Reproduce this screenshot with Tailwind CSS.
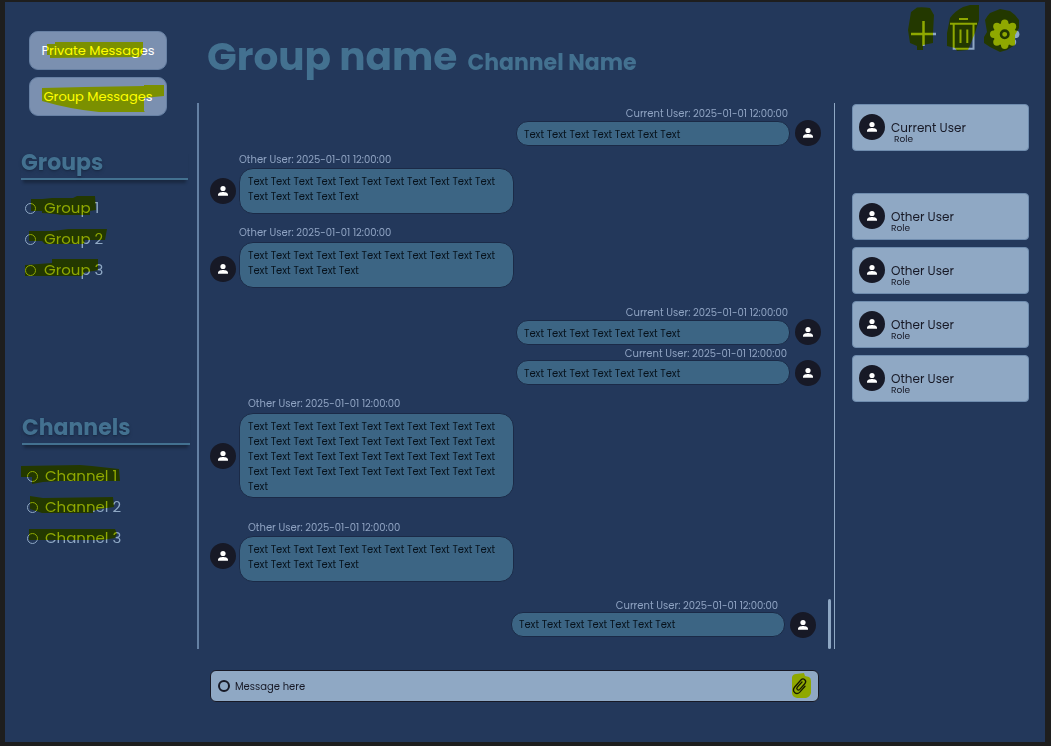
<!DOCTYPE html>
<html lang="en">
<head>
<meta charset="utf-8">
<meta name="viewport" content="width=device-width, initial-scale=1">
<title>Group chat</title>
<script src="https://cdn.jsdelivr.net/npm/@tailwindcss/browser@4"></script>
</head>
<body class="bg-[#1e1e1e] font-[Poppins,Inter,sans-serif]">
<svg class="hidden" aria-hidden="true">
  <symbol id="person" viewBox="0 0 26 26">
    <circle cx="13" cy="13" r="13" fill="#171926"/>
    <circle cx="13" cy="10.5" r="2.6" fill="#fff"/>
    <path d="M8 17.8v-1.2c0-1.7 3-2.5 5-2.5s5 .8 5 2.5v1.2z" fill="#fff"/>
  </symbol>
</svg>

<div class="min-h-screen pt-[2px] pr-[6px] pb-1 pl-[5px] flex">
<div class="flex-1 flex bg-[#23385b]">

  <!-- Sidebar -->
  <aside class="w-[192px] shrink-0 pt-[29px]">
    <nav class="ml-6 flex flex-col gap-[7px] w-[138px]">
      <button class="relative h-[39px] rounded-[9px] bg-[#7b90b0] border border-[#6780a3] text-[13px] text-white whitespace-nowrap">Private Messages
        <svg class="absolute -left-px -top-px w-px h-px overflow-visible mix-blend-multiply" aria-hidden="true"><path fill="#ff0" d="M18 13H26V11H114V22L111 26L21 27V24H18Z"/></svg>
      </button>
      <button class="relative h-[39px] rounded-[9px] bg-[#7b90b0] border border-[#6780a3] text-[13px] text-white whitespace-nowrap">Group Messages
        <svg class="absolute -left-px -top-px w-px h-px overflow-visible mix-blend-multiply" aria-hidden="true"><path fill="#ff0" d="M13 11L56 10L115 9V8H135V19L115 21V34L116 35H70Q40 32 13 24Z"/></svg>
      </button>
    </nav>

    <h2 class="mt-8 ml-4 w-[167px] border-b-2 border-[#437190] leading-[30px] text-[22px] font-bold text-[#437190] text-shadow-md shadow-[0_5px_3px_-2px_rgba(0,0,0,0.3)]">Groups</h2>
    <div class="mt-4 ml-5 flex flex-col gap-[7px] text-[15px] text-[#8fa8c4]">
      <label class="relative h-6 flex items-center gap-2"><input type="radio" name="group" class="appearance-none size-[11px] rounded-full border border-[#8fa8c4]">Group 1
        <svg class="absolute left-0 top-0 w-px h-px overflow-visible mix-blend-multiply" aria-hidden="true"><path fill="#ff0" d="M6 3H17L27 2H48L52 0H70L71 14L65 15V19H37L30 18L17 17V15H6Z"/></svg></label>
      <label class="relative h-6 flex items-center gap-2"><input type="radio" name="group" class="appearance-none size-[11px] rounded-full border border-[#8fa8c4]">Group 2
        <svg class="absolute left-0 top-0 w-px h-px overflow-visible mix-blend-multiply" aria-hidden="true"><path fill="#ff0" d="M4 4H28L43 2H82L80 13H60L59 17H20L17 14H4Z"/></svg></label>
      <label class="relative h-6 flex items-center gap-2"><input type="radio" name="group" class="appearance-none size-[11px] rounded-full border border-[#8fa8c4]">Group 3
        <svg class="absolute left-0 top-0 w-px h-px overflow-visible mix-blend-multiply" aria-hidden="true"><path fill="#ff0" d="M0 7L27 5V1H73V12L69 13L60 14L57 18H0Z"/></svg></label>
    </div>

    <h2 class="mt-[131px] ml-[17px] w-[168px] border-b-2 border-[#437190] leading-[30px] text-[22px] font-bold text-[#437190] text-shadow-md shadow-[0_5px_3px_-2px_rgba(0,0,0,0.3)]">Channels</h2>
    <div class="mt-[19px] ml-[22px] flex flex-col gap-[7px] text-[15px] text-[#8fa8c4]">
      <label class="relative h-6 flex items-center gap-[7px]"><input type="radio" name="channel" class="appearance-none size-[11px] rounded-full border border-[#8fa8c4]">Channel 1
        <svg class="absolute left-0 top-0 w-px h-px overflow-visible mix-blend-multiply" aria-hidden="true"><path fill="#ff0" d="M-6 2L53 1L65 2L92 5L93 17H33L16 18L5 20V13H-6Z"/></svg></label>
      <label class="relative h-6 flex items-center gap-[7px]"><input type="radio" name="channel" class="appearance-none size-[11px] rounded-full border border-[#8fa8c4]">Channel 2
        <svg class="absolute left-0 top-0 w-px h-px overflow-visible mix-blend-multiply" aria-hidden="true"><path fill="#ff0" d="M3 1L16 3L86 2L87 12L73 14L66 16V18H15L3 14Z"/></svg></label>
      <label class="relative h-6 flex items-center gap-[7px]"><input type="radio" name="channel" class="appearance-none size-[11px] rounded-full border border-[#8fa8c4]">Channel 3
        <svg class="absolute left-0 top-0 w-px h-px overflow-visible mix-blend-multiply" aria-hidden="true"><path fill="#ff0" d="M2 3H88L90 8L88 12L76 14H2Z"/></svg></label>
    </div>
  </aside>

  <div class="flex-1 min-w-0 flex flex-col">
    <header class="h-[101px] flex justify-between">
      <div class="flex items-baseline gap-[10px] pl-[10px] pt-[25px] text-[#437190] font-bold whitespace-nowrap">
        <h1 class="text-[39px] leading-[60px]">Group name</h1>
        <p class="text-[22px]">Channel Name</p>
      </div>
      <div class="flex pr-[21px] pt-[2px] text-[#8fa8c4]">
        <button aria-label="Add" class="w-10 h-[50px]">
          <svg class="w-10 h-[50px]" viewBox="0 0 40 50"><path d="M7 30H32M19.500 17V42" stroke="currentColor" stroke-width="2.500" fill="none"/><path class="mix-blend-multiply" fill="#ff0" d="M7 8L13 3.500Q20 3 26 4L30 11L29 29V39L19 41V46H13V42L6 39L4 26Z"/></svg>
        </button>
        <button aria-label="Delete" class="w-10 h-[50px]">
          <svg class="w-10 h-[50px]" viewBox="0 0 40 50"><path d="M6 19.700H33M15 15H24M9.700 20V44.700H29.500V20M16.500 25.500V39M23.300 25.500V39" stroke="currentColor" stroke-width="2" fill="none"/><path class="mix-blend-multiply" fill="#ff0" d="M6 14Q11 7 19 3L26 1H35V16L31 29L24 46L13 47L11 44L3 42V29Z"/></svg>
        </button>
        <button aria-label="Settings" class="w-10 h-[50px]">
          <svg class="w-10 h-[50px]" viewBox="0 0 40 50"><g transform="translate(20.700 30.300)"><g fill="currentColor"><circle r="11.300"/><circle cy="-11" r="3.700"/><circle cy="11" r="3.700"/><circle cx="-11" r="3.700"/><circle cx="11" r="3.700"/><circle cx="7.800" cy="7.800" r="3.700"/><circle cx="-7.800" cy="7.800" r="3.700"/><circle cx="7.800" cy="-7.800" r="3.700"/><circle cx="-7.800" cy="-7.800" r="3.700"/></g><circle r="3.700" fill="none" stroke="#23385b" stroke-width="2.600"/></g><path class="mix-blend-multiply" fill="#ff0" d="M1 16Q3 12 6 9L16 5L26 7L31 11L35 16V24L31 31V41L23 46L16 48L6 43L0 39V33L3 28Z"/></svg>
        </button>
      </div>
    </header>

    <div class="flex">
      <main class="flex-1 min-w-0">
        <section aria-label="Messages" class="relative h-[546px] border-l-2 border-l-[#6480a3] border-r border-r-[#8fa8c4] pl-[11px] pr-[13px] pt-[5px] text-[10px]">
          <article class="flex flex-col items-end text-[#8fa3c2]">
            <p class="leading-3 mr-[33px]">Current User: 2025-01-01 12:00:00</p>
            <div class="flex items-center gap-[5px]"><p class="w-[274px] rounded-[12px] border border-[#1b2a47] bg-[#3c6584] px-[7px] pt-[5px] pb-[3px] leading-[15px] text-[#07121c]">Text Text Text Text Text Text Text</p><svg class="size-[26px]"><use href="#person"/></svg></div>
          </article>
          <article class="mt-2 text-[#8fa3c2]">
            <p class="leading-3 ml-[29px] mb-[2px]">Other User: 2025-01-01 12:00:00</p>
            <div class="flex items-center gap-[3px]"><svg class="size-[26px]"><use href="#person"/></svg><p class="w-[275px] min-h-[46px] rounded-[14px] border border-[#1b2a47] bg-[#3c6584] px-2 pt-[5px] pb-[3px] leading-[15px] text-[#07121c]">Text Text Text Text Text Text Text Text Text Text Text Text Text Text Text Text</p></div>
          </article>
          <article class="mt-[13px] text-[#8fa3c2]">
            <p class="leading-3 ml-[29px] mb-[3px]">Other User: 2025-01-01 12:00:00</p>
            <div class="flex items-end gap-[3px]"><svg class="size-[26px] mb-[6px]"><use href="#person"/></svg><p class="w-[275px] min-h-[46px] rounded-[14px] border border-[#1b2a47] bg-[#3c6584] px-2 pt-[5px] pb-[3px] leading-[15px] text-[#07121c]">Text Text Text Text Text Text Text Text Text Text Text Text Text Text Text Text</p></div>
          </article>
          <article class="mt-[19px] flex flex-col items-end text-[#8fa3c2]">
            <p class="leading-3 mr-[33px]">Current User: 2025-01-01 12:00:00</p>
            <div class="flex items-center gap-[5px]"><p class="w-[274px] rounded-[12px] border border-[#1b2a47] bg-[#3c6584] px-[7px] pt-[5px] pb-[3px] leading-[15px] text-[#07121c]">Text Text Text Text Text Text Text</p><svg class="size-[26px]"><use href="#person"/></svg></div>
          </article>
          <article class="mt-[3px] flex flex-col items-end text-[#8fa3c2]">
            <p class="leading-3 mr-[34px]">Current User: 2025-01-01 12:00:00</p>
            <div class="flex items-start gap-[5px]"><p class="w-[274px] rounded-[12px] border border-[#1b2a47] bg-[#3c6584] px-[7px] pt-[5px] pb-[3px] leading-[15px] text-[#07121c]">Text Text Text Text Text Text Text</p><svg class="size-[26px]"><use href="#person"/></svg></div>
          </article>
          <article class="mt-3 text-[#8fa3c2]">
            <p class="leading-3 ml-[38px] mb-[3px]">Other User: 2025-01-01 12:00:00</p>
            <div class="flex items-center gap-[3px]"><svg class="size-[26px]"><use href="#person"/></svg><p class="w-[275px] min-h-[46px] rounded-[14px] border border-[#1b2a47] bg-[#3c6584] px-2 pt-[5px] pb-[3px] leading-[15px] text-[#07121c]">Text Text Text Text Text Text Text Text Text Text Text Text Text Text Text Text Text Text Text Text Text Text Text Text Text Text Text Text Text Text Text Text Text Text Text Text Text Text Text Text Text Text Text Text Text</p></div>
          </article>
          <article class="mt-6 text-[#8fa3c2]">
            <p class="leading-3 ml-[38px] mb-[2px]">Other User: 2025-01-01 12:00:00</p>
            <div class="flex items-start gap-[3px]"><svg class="size-[26px] mt-[7px]"><use href="#person"/></svg><p class="w-[275px] min-h-[46px] rounded-[14px] border border-[#1b2a47] bg-[#3c6584] px-2 pt-[5px] pb-[3px] leading-[15px] text-[#07121c]">Text Text Text Text Text Text Text Text Text Text Text Text Text Text Text Text</p></div>
          </article>
          <article class="mt-[18px] mr-[5px] flex flex-col items-end text-[#8fa3c2]">
            <p class="leading-3 mr-[38px]">Current User: 2025-01-01 12:00:00</p>
            <div class="flex items-start gap-[5px]"><p class="w-[274px] rounded-[12px] border border-[#1b2a47] bg-[#3c6584] px-[7px] py-1 leading-[15px] text-[#07121c]">Text Text Text Text Text Text Text</p><svg class="size-[26px]"><use href="#person"/></svg></div>
          </article>
          <div class="absolute right-[3px] bottom-0 w-[3px] h-[50px] rounded-full bg-[#8fa8c4]"></div>
        </section>

        <form class="mt-[21px] ml-[13px] mr-4 h-8 flex items-center gap-[5px] rounded-[6px] border border-[#171926] bg-[#8fa8c4] pl-[7px] pr-[7px]">
          <button type="button" aria-label="Message options" class="size-3 rounded-full border-2 border-[#171926]"></button>
          <input type="text" aria-label="Message" placeholder="Message here" class="flex-1 min-w-0 text-[10px] text-[#171926] placeholder:text-[#171926] outline-none">
          <button type="button" aria-label="Attach file" class="h-[26px] w-5">
            <svg class="w-5 h-[26px]" viewBox="0 0 20 26"><path d="M11.500 8.500L6.800 13.600C5.300 15.600 7.600 17.600 9.300 15.900L14.300 10.300C16.800 7 13 3.900 10.400 6.500L4.200 13.500C.800 17.800 5.800 22 9.300 18.600L14.500 12.800" transform="translate(-.500 .500)" fill="none" stroke="#171926" stroke-width="1.300" stroke-linecap="round"/><path class="mix-blend-multiply" fill="#ff0" d="M1 4Q2 1 5 1L13 0L14 3L18 4Q20 5 20 8V20Q19 24 15 25H6Q1 24 1 20Z"/></svg>
          </button>
        </form>
      </main>

      <aside aria-label="Members" class="w-[210px] shrink-0 pl-[17px] pr-4 pt-px">
        <ul class="flex flex-col gap-[7px] leading-3 text-[#171926]">
          <li class="h-[47px] mb-[35px] flex items-start gap-[6px] rounded-[4px] border border-[#6f8cae] bg-[#8fa8c4] pl-[6px] pt-[9px]"><svg class="size-[26px]"><use href="#person"/></svg><div class="pt-2"><p class="text-[12px]">Current User</p><p class="ml-[3px] text-[9px] leading-[10px]">Role</p></div></li>
          <li class="h-[47px] flex items-start gap-[6px] rounded-[4px] border border-[#6f8cae] bg-[#8fa8c4] pl-[6px] pt-[9px]"><svg class="size-[26px]"><use href="#person"/></svg><div class="pt-2"><p class="text-[12px]">Other User</p><p class="text-[9px] leading-[10px]">Role</p></div></li>
          <li class="h-[47px] flex items-start gap-[6px] rounded-[4px] border border-[#6f8cae] bg-[#8fa8c4] pl-[6px] pt-[9px]"><svg class="size-[26px]"><use href="#person"/></svg><div class="pt-2"><p class="text-[12px]">Other User</p><p class="text-[9px] leading-[10px]">Role</p></div></li>
          <li class="h-[47px] flex items-start gap-[6px] rounded-[4px] border border-[#6f8cae] bg-[#8fa8c4] pl-[6px] pt-[9px]"><svg class="size-[26px]"><use href="#person"/></svg><div class="pt-2"><p class="text-[12px]">Other User</p><p class="text-[9px] leading-[10px]">Role</p></div></li>
          <li class="h-[47px] flex items-start gap-[6px] rounded-[4px] border border-[#6f8cae] bg-[#8fa8c4] pl-[6px] pt-[9px]"><svg class="size-[26px]"><use href="#person"/></svg><div class="pt-2"><p class="text-[12px]">Other User</p><p class="text-[9px] leading-[10px]">Role</p></div></li>
        </ul>
      </aside>
    </div>
  </div>
</div>
</div>
</body>
</html>
